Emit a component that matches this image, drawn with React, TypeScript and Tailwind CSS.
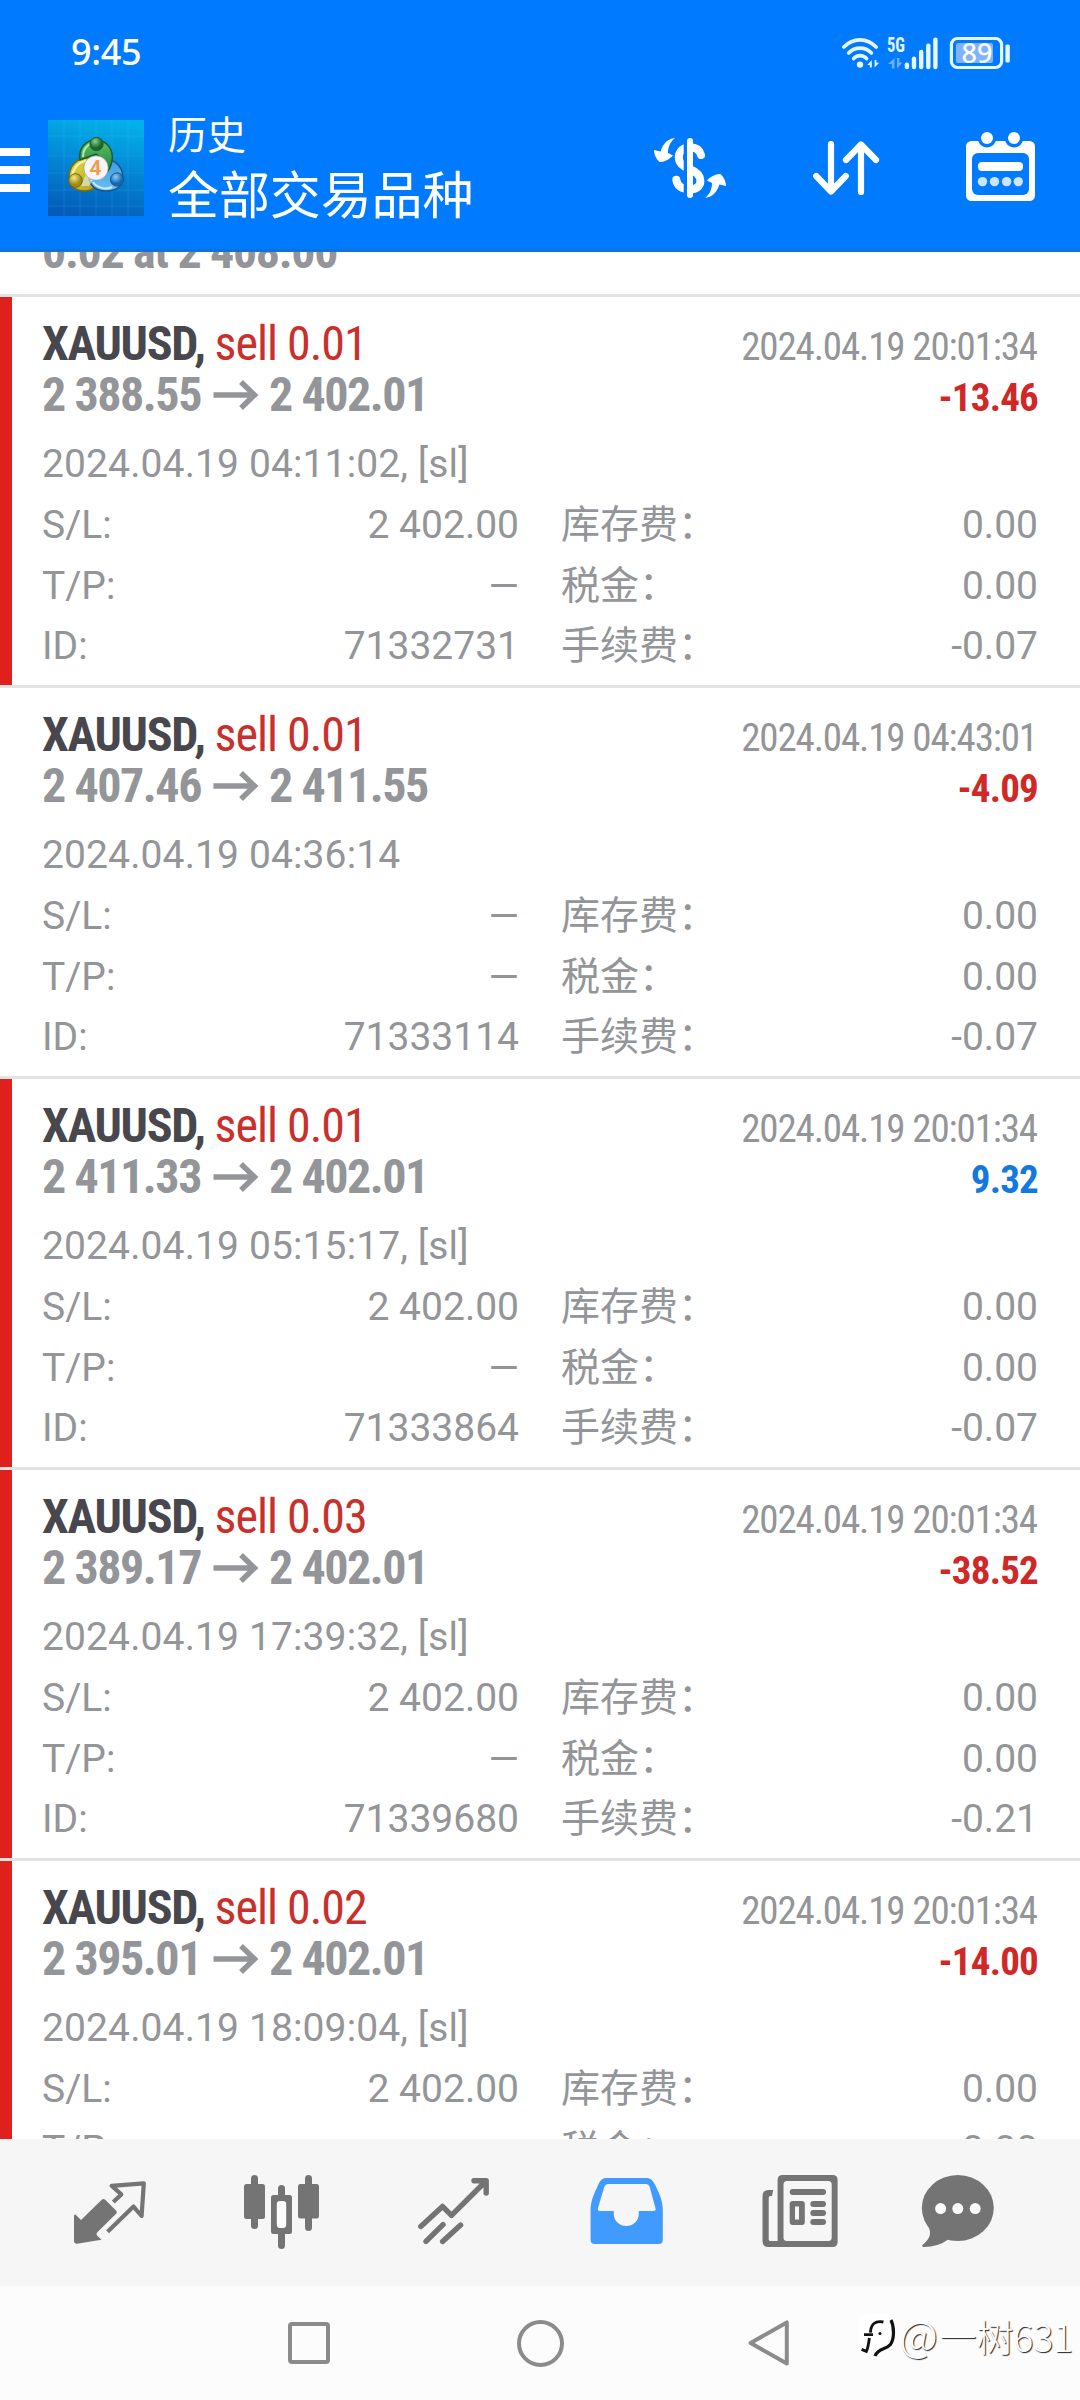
import type { ReactNode } from 'react';

type Deal = {
  id: string;
  type: string;
  open: string;
  close: string;
  closedAt: string;
  openedAt: string;
  profit: string;
  sl: string | null;
  fee: string;
};

const deals: Deal[] = [
  { id: '71332731', type: 'sell 0.01', open: '2 388.55', close: '2 402.01', closedAt: '2024.04.19 20:01:34', openedAt: '2024.04.19 04:11:02', profit: '-13.46', sl: '2 402.00', fee: '-0.07' },
  { id: '71333114', type: 'sell 0.01', open: '2 407.46', close: '2 411.55', closedAt: '2024.04.19 04:43:01', openedAt: '2024.04.19 04:36:14', profit: '-4.09', sl: null, fee: '-0.07' },
  { id: '71333864', type: 'sell 0.01', open: '2 411.33', close: '2 402.01', closedAt: '2024.04.19 20:01:34', openedAt: '2024.04.19 05:15:17', profit: '9.32', sl: '2 402.00', fee: '-0.07' },
  { id: '71339680', type: 'sell 0.03', open: '2 389.17', close: '2 402.01', closedAt: '2024.04.19 20:01:34', openedAt: '2024.04.19 17:39:32', profit: '-38.52', sl: '2 402.00', fee: '-0.21' },
  { id: '71340125', type: 'sell 0.02', open: '2 395.01', close: '2 402.01', closedAt: '2024.04.19 20:01:34', openedAt: '2024.04.19 18:09:04', profit: '-14.00', sl: '2 402.00', fee: '-0.14' },
];

function StatusBar() {
  return (
    <div className="flex h-[105px] items-center justify-between pl-[71px] pr-[66px]">
      <span className="pb-[2px] font-['Noto_Sans',sans-serif] text-[36px] font-medium leading-[48px] tracking-[-0.3px] text-white">9:45</span>
      <svg className="h-[48px] w-[174px]" viewBox="840 28 174 48" fill="none" stroke="#e6f6ff" strokeLinecap="round">
        {/* wifi */}
        <g strokeWidth="3.6">
          <path d="M843.8 46 C853 36.5 867 36.5 876.2 46" />
          <path d="M848.6 52 C855 45.5 865 45.5 871.4 52" />
          <path d="M853.6 57.6 C857 53.6 863 53.6 866.6 57.6" />
        </g>
        <circle cx="860" cy="63.6" r="3.2" fill="#e6f6ff" stroke="none" />
        <path d="M871.8 59V66.5H869.8V64H867.2ZM874.6 66.5V59H876.4V61.8H879.2Z" fill="#e6f6ff" stroke="none" />
        {/* mobile signal */}
        <text x="887" y="51" textLength="18" lengthAdjust="spacingAndGlyphs" fontFamily="Roboto Condensed, Roboto, sans-serif" fontSize="20" fontWeight="700" fill="#e6f6ff" stroke="none">5G</text>
        <path d="M894.5 57V67.5H891.8V63H888ZM897 67.5V57H899.4V61.6H902.4Z" fill="#6cb0ff" stroke="none" />
        <g strokeWidth="4.4">
          <path d="M906.9 63.6V66" />
          <path d="M914 57.6V66" />
          <path d="M921.2 51V66" />
          <path d="M928.3 44.6V66" />
          <path d="M935.4 38.6V66" />
        </g>
        {/* battery */}
        <rect x="951.4" y="37.5" width="50.2" height="29" rx="6" strokeWidth="3.2" />
        <rect x="956" y="42" width="37" height="20" rx="2" fill="#80b3ff" stroke="none" />
        <rect x="1005.4" y="43.4" width="4.4" height="18" rx="1.5" fill="#e6f6ff" stroke="none" />
        <text x="961.5" y="61.6" textLength="31" fontFamily="Noto Sans, sans-serif" fontSize="27" fontWeight="500" fill="#ffffff" stroke="none">89</text>
      </svg>
    </div>
  );
}

function Logo() {
  return (
    <svg className="ml-[18px] h-24 w-24" viewBox="0 0 96 96">
      <defs>
        <linearGradient id="bg" x1="0.6" y1="0" x2="0.4" y2="1">
          <stop offset="0" stopColor="#03b0e8" />
          <stop offset="0.45" stopColor="#0389d6" />
          <stop offset="1" stopColor="#035cb8" />
        </linearGradient>
        <linearGradient id="green" x1="0" y1="0" x2="0" y2="1">
          <stop offset="0" stopColor="#5fc264" />
          <stop offset="1" stopColor="#1d7a3a" />
        </linearGradient>
        <linearGradient id="yellow" x1="0" y1="0" x2="1" y2="1">
          <stop offset="0" stopColor="#e8e04a" />
          <stop offset="1" stopColor="#b09a1a" />
        </linearGradient>
        <linearGradient id="blue" x1="0" y1="0" x2="0" y2="1">
          <stop offset="0" stopColor="#3d9be0" />
          <stop offset="1" stopColor="#6cc0f0" />
        </linearGradient>
        <radialGradient id="gball" cx="0.4" cy="0.3"><stop offset="0" stopColor="#8fd08a" /><stop offset="1" stopColor="#17682e" /></radialGradient>
        <radialGradient id="yball" cx="0.4" cy="0.3"><stop offset="0" stopColor="#f3ec8c" /><stop offset="1" stopColor="#a08a14" /></radialGradient>
        <radialGradient id="bball" cx="0.4" cy="0.3"><stop offset="0" stopColor="#8ccdf5" /><stop offset="1" stopColor="#1668b4" /></radialGradient>
      </defs>
      <rect width="96" height="96" fill="url(#bg)" />
      <path d="M16 0V96M32 0V96M48 0V96M64 0V96M80 0V96M0 16H96M0 36H96M0 53H96M0 70H96M0 86H96" stroke="#5cc4f5" strokeOpacity="0.18" strokeWidth="1" />
      {/* yellow */}
      <path d="M41 38C29 37 21 46 21 58C21 67 29 71 37 71C43 71 48 68 52 63L40 54Z" fill="url(#yellow)" stroke="#716a18" strokeWidth="1.5" />
      <path d="M38 41C30 42 25 49 24 56" stroke="#fbf6a8" strokeWidth="2" fill="none" />
      {/* blue */}
      <path d="M60 40C68 40 75 48 75 58C75 67 67 71 58 71C49 71 43 67 41 59L56 56Z" fill="url(#blue)" stroke="#15568f" strokeWidth="1.5" />
      <path d="M45 62C49 68 58 70 64 67" stroke="#c8eaff" strokeWidth="2" fill="none" />
      {/* green */}
      <path d="M32 40C30 28 38 20 48 20C59 20 66 30 64 41C63 46 62 50 57 54L55 40L48 34Z" fill="url(#green)" stroke="#1b5c2c" strokeWidth="1.5" />
      <path d="M35 37C35 29 39 25 44 23" stroke="#b5ebb0" strokeWidth="2" fill="none" />
      <path d="M33 66L38 54L45 60L41 66Z" fill="#dcebd8" fillOpacity="0.7" />
      <circle cx="48.5" cy="24" r="6.6" fill="url(#gball)" stroke="#1b5c2c" />
      <circle cx="27.5" cy="60.5" r="6.8" fill="url(#yball)" stroke="#716a18" />
      <circle cx="69" cy="59.5" r="6.6" fill="url(#bball)" stroke="#15568f" />
      <circle cx="48" cy="48" r="12.2" fill="#f6f4f4" stroke="#8a9a8a" strokeWidth="0.6" />
      <text x="47.6" y="55" textAnchor="middle" fontFamily="Roboto, sans-serif" fontSize="21" fontWeight="600" fill="#f39a45">4</text>
    </svg>
  );
}

function AppBar() {
  return (
    <div className="flex h-[126px] items-center pr-[42px]">
      <div className="flex w-[30px] flex-col gap-[10px] pt-1">
        <span className="h-2 bg-white" />
        <span className="h-2 bg-white" />
        <span className="h-2 bg-white" />
      </div>
      <Logo />
      <div className="ml-[24px] flex h-[126px] flex-col font-['Noto_Sans_CJK_SC',sans-serif] text-white">
        <span className="text-[39px] leading-[54px]">历史</span>
        <span className="text-[51px] leading-[66px] tracking-[-0.1px]">全部交易品种</span>
      </div>
      <div className="ml-auto flex gap-20">
        <svg className="h-[76px] w-20" viewBox="650 130 80 76">
          <path
            d="M701 155C699.5 149 695 147.2 690 147.2C683 147.2 678.8 151.5 678.8 157.5C678.8 164 684 167 690 169.3C697 172 700.4 175.5 700.4 181C700.4 186.5 696 189.3 690 189.3C682 189.3 677 186 676.3 179.8"
            fill="none" stroke="#fff" strokeWidth="8" strokeLinecap="round"
          />
          <path d="M685.5 138V198" stroke="#007aff" strokeWidth="3.6" />
          <path d="M690 141V195" stroke="#fff" strokeWidth="6" strokeLinecap="round" />
          <path d="M675 138C667 139 663 144 660.6 151.4L654 150C654 155 657 160 659.6 162C664 162.4 670 159 673 155.6L668 153C668 147 670 142 675 138Z" fill="#fff" />
          <path d="M675 138C667 139 663 144 660.6 151.4L654 150C654 155 657 160 659.6 162C664 162.4 670 159 673 155.6L668 153C668 147 670 142 675 138Z" fill="#fff" transform="rotate(180 690 168)" />
        </svg>
        <svg className="h-[76px] w-[72px]" viewBox="810 130 72 76" fill="none" stroke="#fff" strokeWidth="6.2" strokeLinecap="round" strokeLinejoin="round">
          <path d="M831 144V191M816.2 176L831 191.5L845.8 176" />
          <path d="M861 192V144.5M846 160L861 144.5L876 160" />
        </svg>
        <svg className="h-[76px] w-[76px]" viewBox="962 130 76 76">
          <rect x="966" y="141" width="69" height="60" rx="5.5" fill="#fff" />
          <path d="M978 138v1a9 8.4 0 0 0 18 0v-1zM1005 138v1a9 8.4 0 0 0 18 0v-1z" fill="#007aff" />
          <circle cx="987" cy="138" r="6" fill="#fff" />
          <circle cx="1014" cy="138" r="6" fill="#fff" />
          <rect x="972" y="153" width="57" height="42" rx="6" fill="#007aff" />
          <rect x="978" y="162" width="45" height="9" rx="4" fill="#fff" />
          <g fill="#cce4ff">
            <circle cx="982.5" cy="181.6" r="4.7" />
            <circle cx="994.5" cy="181.6" r="4.7" />
            <circle cx="1006.6" cy="181.6" r="4.7" />
            <circle cx="1018.3" cy="181.6" r="4.7" />
          </g>
        </svg>
      </div>
    </div>
  );
}

function Field({ label, value }: { label: string; value: string }) {
  return (
    <div className="flex justify-between">
      <span>{label}</span>
      <span>{value}</span>
    </div>
  );
}

function DealCard({ deal }: { deal: Deal }) {
  const loss = deal.profit.startsWith('-');
  return (
    <div className="flex h-[391px] shrink-0 border-t-[3px] border-[#e3e3e3] text-[#939598]">
      <div className={deal.sl ? 'w-3 bg-[#e0201c]' : 'w-3'} />
      <div className="flex-1 pl-[30px] pr-[42px] pt-[23px]">
        <div className="flex h-[48px] items-baseline justify-between font-['Roboto_Condensed','Roboto',sans-serif] leading-[48px]">
          <div className="text-[48px]">
            <span className="font-bold tracking-[-1.3px] text-[#47474d]">XAUUSD, </span>
            <span className="tracking-[-1px] text-[#c9302c]">{deal.type}</span>
          </div>
          <span className="mr-px text-[39px] tracking-[-1.13px]">{deal.closedAt}</span>
        </div>
        <div className="flex h-[53px] items-baseline justify-between font-['Roboto_Condensed','Roboto',sans-serif] font-bold leading-[53px]">
          <div className="flex items-baseline text-[48px] tracking-[-1.45px]">
            <span>{deal.open}</span>
            <svg className="ml-[12px] mr-[10px] h-[32px] w-[46px]" viewBox="0 0 46 32" fill="none" stroke="#939598" strokeWidth="5.5">
              <path d="M0.5 16H41M28 3L41.5 16L28 29" />
            </svg>
            <span>{deal.close}</span>
          </div>
          <span className={`text-[39px] tracking-[-0.8px] ${loss ? 'text-[#d02826]' : 'text-[#1379e0]'}`}>{deal.profit}</span>
        </div>
        <div className="mt-[13px] font-['Roboto','Noto_Sans_CJK_SC',sans-serif] text-[39px] leading-[61px]">
          <div className="tracking-[0.12px]">{deal.openedAt}{deal.sl && ', [sl]'}</div>
          <div className="grid grid-cols-2 grid-rows-[61px_60px_60px] gap-x-[42px]">
            <Field label="S/L:" value={deal.sl ?? '—'} />
            <Field label="库存费：" value="0.00" />
            <Field label="T/P:" value="—" />
            <Field label="税金：" value="0.00" />
            <Field label="ID:" value={deal.id} />
            <Field label="手续费：" value={deal.fee} />
          </div>
        </div>
      </div>
    </div>
  );
}

function Tab({ box, children }: { box: string; children: ReactNode }) {
  return <svg className="h-20 w-20" viewBox={box} fill="#747474">{children}</svg>;
}

function TabBar() {
  return (
    <div className="flex h-[147px] shrink-0 gap-[92px] bg-[#f6f6f6] pl-[70px] pt-[33px]">
      <Tab box="70 2172 80 80">
        <path d="M74 2215L75.5 2214.6L81 2220L102 2199.6Q103.4 2198.4 105 2199.6L116 2210.4Q117.6 2212 116.4 2213.4L97.6 2232Q95.6 2234 97 2235.4L101.5 2239.8L77 2243.8Q74 2243.8 74 2241Z" />
        <path d="M113.3 2202L121.3 2194.4L111.6 2185.8L143.8 2183.4L141.6 2216L133.5 2206.6L107.6 2231.8" fill="none" stroke="#747474" strokeWidth="4.2" strokeLinejoin="round" />
      </Tab>
      <Tab box="242 2172 80 80">
        <rect x="251" y="2175" width="7" height="54" rx="3.5" />
        <rect x="244" y="2184" width="21" height="35" rx="2.5" />
        <rect x="305" y="2175" width="7" height="56" rx="3.5" />
        <rect x="298" y="2184" width="21" height="34.5" rx="2.5" />
        <rect x="278" y="2185" width="7" height="64" rx="3.5" />
        <rect x="271" y="2195" width="21" height="39" rx="2.5" />
        <rect x="276.8" y="2201" width="9.4" height="27" rx="3" fill="#fcfcfc" />
      </Tab>
      <Tab box="414 2172 80 80">
        <g fill="none" stroke="#747474" strokeWidth="5.4" strokeLinecap="round" strokeLinejoin="round">
          <path d="M420.8 2226.4L442.5 2206.4L451.5 2215.4L485 2182M474 2180.8H486.2V2193" />
          <path d="M426 2241.4L443 2224.6M442.6 2241.4L460.6 2225" />
        </g>
      </Tab>
      <Tab box="586 2172 80 80">
        <path fill="#419bff" fillRule="evenodd" d="M606 2178H647C651.5 2178 653.6 2181.5 656.4 2187.5C660 2195 662.8 2202 662.8 2210V2240Q662.8 2244 658.8 2244H594.6Q590.6 2244 590.6 2240V2210C590.6 2202 593.4 2195 597 2187.5C599.6 2181.5 601.5 2178 606 2178ZM608 2184Q605.4 2184 604.4 2186.6L598 2208Q597.2 2211 600 2211H613.8V2214A12.5 12 0 0 0 638.8 2214V2211H653.4Q656.4 2211 655.4 2208L649.6 2186.6Q648.6 2184 646 2184Z" />
      </Tab>
      <Tab box="758 2172 80 80">
        <path fillRule="evenodd" d="M782.6 2175H832.6Q837.6 2175 837.6 2180V2242Q837.6 2247 832.6 2247H768.5Q762.5 2247 762.5 2241V2196Q762.5 2190 768.5 2190H773.2L772 2196H770.5Q768.7 2196 768.7 2198V2239.4Q768.7 2241 770.5 2241H777.6V2180Q777.6 2175 782.6 2175ZM787 2181Q783.5 2181 783.5 2184.5V2237.5Q783.5 2241 787 2241H828.2Q831.7 2241 831.7 2237.5V2184.5Q831.7 2181 828.2 2181Z" />
        <rect x="789.7" y="2189" width="36.3" height="6" rx="3" />
        <path fillRule="evenodd" d="M792.7 2201H801.8Q804.8 2201 804.8 2204V2222Q804.8 2225 801.8 2225H792.7Q789.7 2225 789.7 2222V2204Q789.7 2201 792.7 2201ZM795 2206.6V2219.4H799V2206.6Z" />
        <rect x="810.3" y="2201" width="15.7" height="6" rx="3" />
        <rect x="810.3" y="2210" width="15.7" height="6" rx="3" />
        <rect x="810.3" y="2219" width="15.7" height="6" rx="3" />
      </Tab>
      <div className="-ml-[14px]">
        <Tab box="916 2172 80 80">
          <ellipse cx="957.8" cy="2208" rx="36" ry="33" />
          <path d="M928 2226Q934 2236 922.4 2245Q921.6 2247 924 2247Q938 2247 949 2239Z" />
          <g fill="#fcfcfc">
            <circle cx="940.6" cy="2208.6" r="5.5" />
            <circle cx="957.8" cy="2208.6" r="5.5" />
            <circle cx="975.2" cy="2208.6" r="5.5" />
          </g>
        </Tab>
      </div>
    </div>
  );
}

function SystemNav() {
  return (
    <div className="relative flex h-[114px] shrink-0 items-center bg-[#fcfcfc] pl-[288px]">
      <div className="h-[42px] w-[42px] rounded-[4px] border-4 border-[#8b8b8b]" />
      <div className="ml-[187px] h-[47px] w-[47px] rounded-full border-4 border-[#8b8b8b]" />
      <svg className="ml-[184px] h-[46px] w-[42px]" viewBox="0 0 42 46">
        <path d="M38.8 2.4V43.6L2.6 23Z" fill="none" stroke="#8b8b8b" strokeWidth="4" strokeLinejoin="round" />
      </svg>
      <div className="absolute right-[7px] top-[26px] flex items-center">
        <svg className="h-12 w-[44px]" viewBox="856 2318 44 48" fill="none">
          <rect x="858" y="2320" width="37" height="38" rx="9" fill="#fff" />
          <path d="M883.4 2328C875 2326.4 871 2330 870.4 2338.6M864 2340.6H873M869.4 2344C868.6 2350 868 2354 866.4 2357.4L861.6 2355.4" stroke="#111" strokeWidth="2.8" />
          <circle cx="880" cy="2339.5" r="1.5" fill="#111" />
          <path d="M891 2326C894.4 2333 894.4 2345 890.4 2350.6C886 2356 878 2354 875 2362" stroke="#111" strokeWidth="3.2" />
        </svg>
        <span className="font-['Noto_Sans_CJK_SC',sans-serif] text-[37px] font-light leading-[48px] text-white [text-shadow:1px_1px_1px_#222]">
          <span className="mr-px inline-block w-[39px] text-[42px] leading-[40px]">@</span>一树631
        </span>
      </div>
    </div>
  );
}

export default function App() {
  return (
    <div className="flex h-[2400px] w-[1080px] flex-col overflow-hidden bg-white">
      <header className="h-[252px] shrink-0 border-b-[3px] border-[#1272d6] bg-[#007aff]">
        <StatusBar />
        <AppBar />
      </header>

      <main className="flex h-[1887px] shrink-0 flex-col overflow-hidden">
        {/* tail of the entry scrolled under the header */}
        <div className="flex h-[42px] shrink-0 items-end overflow-hidden pb-[18px] pl-[42px]">
          <span className="font-['Roboto_Condensed','Roboto',sans-serif] text-[48px] font-bold leading-[48px] tracking-[-1.35px] text-[#939598]">0.02 at 2 408.00</span>
        </div>
        {deals.map((deal) => (
          <DealCard key={deal.id} deal={deal} />
        ))}
      </main>

      <TabBar />
      <SystemNav />
    </div>
  );
}
